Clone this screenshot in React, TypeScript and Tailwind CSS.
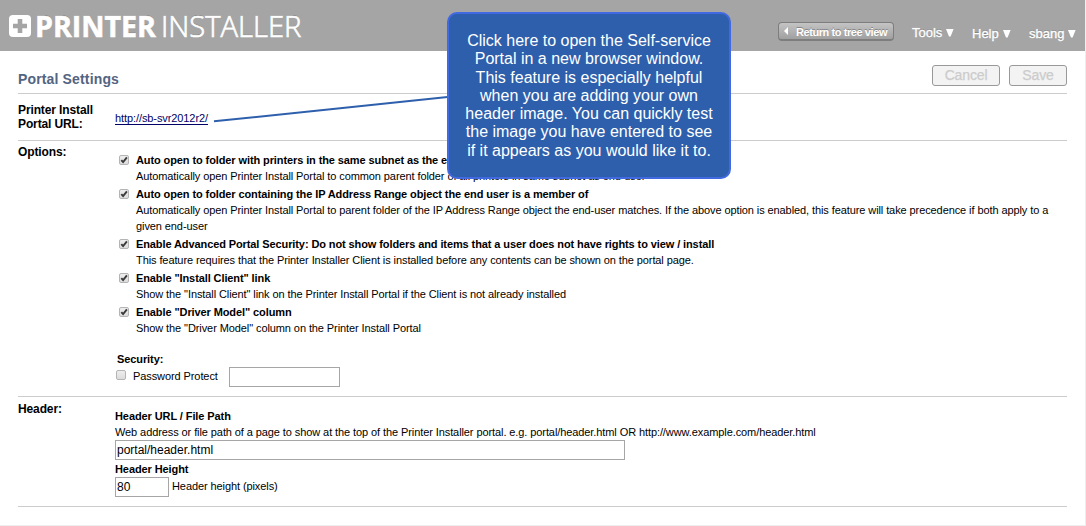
import type { ReactNode } from "react";

function CheckBox({ checked = false }: { checked?: boolean }) {
  return (
    <span
      role="checkbox"
      aria-checked={checked}
      className="block h-[10px] w-[10px] shrink-0 rounded-[2px] border border-[#b4b4b4] bg-linear-to-b from-[#eeeeee] to-[#dcdcdc]"
    >
      {checked && (
        <svg viewBox="0 0 8 8" className="block h-2 w-2">
          <path d="M1.3 4.1 L3.1 6.1 L6.9 1.3" fill="none" stroke="#3a3a3a" strokeWidth="1.9" />
        </svg>
      )}
    </span>
  );
}

function Option({ title, children }: { title: ReactNode; children: ReactNode }) {
  return (
    <div className="mb-0.5 flex gap-[7px]">
      <div className="pt-[3px]">
        <CheckBox checked />
      </div>
      <div className="leading-4 whitespace-nowrap">
        <div className="font-bold tracking-[-0.1px]">{title}</div>
        <div>{children}</div>
      </div>
    </div>
  );
}

function Row({ label, className, children }: { label: ReactNode; className: string; children: ReactNode }) {
  return (
    <section className={`flex border-b border-[#cccccc] ${className}`}>
      <h2 className="w-[97px] shrink-0 text-[12px] leading-[14px] font-bold tracking-[-0.12px] whitespace-nowrap">{label}</h2>
      <div className="min-w-0 flex-1">{children}</div>
    </section>
  );
}

function Menu({ label }: { label: string }) {
  return (
    <span className="flex items-center gap-1 [text-shadow:0_-1px_0_#858585]">
      <span className="[-webkit-text-stroke:0.3px_white]">{label}</span>
      <svg viewBox="0 0 8 8" className="h-2 w-2">
        <path d="M0 0H7.6L4.6 7.6H3Z" fill="white" />
      </svg>
    </span>
  );
}

export default function App() {
  return (
    <div className="relative h-[526px] w-[1086px] overflow-hidden bg-white font-['Liberation_Sans',Arial,sans-serif] text-[11px] tracking-[-0.09px] text-black">
      <div className="h-full w-full border-r border-b border-[#eeeeee]">
        <header className="flex h-[51px] bg-[#a5a5a5] text-white">
          <div className="flex w-[778px] pt-[15px] pl-[9px]">
            <svg viewBox="0 0 22 22" className="h-[22px] w-[22px]">
              <rect width="22" height="22" rx="4" fill="white" />
              <path d="M8.7 4H13.3V8.7H18V13.3H13.3V18H8.7V13.3H4V8.7H8.7Z" fill="#a5a5a5" />
            </svg>
            <div className="ml-[4px] flex h-[22px] items-center font-['Open_Sans',sans-serif] text-[29px] leading-[22px] tracking-normal whitespace-nowrap [text-shadow:0_-1px_0_#8c8c8c]">
              <span className="w-[126px]">
                <span className="inline-block origin-left scale-x-[0.985] font-bold [-webkit-text-stroke:0.6px_white]">PRINTER</span>
              </span>
              <span>
                <span className="inline-block origin-left scale-x-[1.005] font-light [-webkit-text-stroke:0.7px_white]">INSTALLER</span>
              </span>
            </div>
          </div>
          <button className="mt-[22px] flex h-[19px] w-[116px] items-center rounded-[4px] border border-b-2 border-[#7d7d7d] bg-linear-to-b from-[#c4c4c4] to-[#a0a0a0] pl-[5px] text-[11px] font-bold tracking-[-0.42px] whitespace-nowrap [text-shadow:0_-1px_0_#858585]">
            <svg viewBox="0 0 4 8" className="mr-[8px] h-[8px] w-[4px] shrink-0">
              <path d="M4 0V8L0 4Z" fill="white" />
            </svg>
            <span className="pt-[2px]">Return to tree view</span>
          </button>
          <nav className="flex pt-[25px] text-[13px] leading-4 tracking-normal whitespace-nowrap">
            <div className="ml-[18px] w-[60px]"><Menu label="Tools" /></div>
            <div className="w-[57px] pt-px"><Menu label="Help" /></div>
            <div className="pt-px"><Menu label="sbang" /></div>
          </nav>
        </header>
        <main className="mr-[18px] ml-[18px]">
          <div className="flex h-[43px] justify-between border-b border-[#cccccc]">
            <h1 className="pt-[20px] text-[14px] leading-4 font-bold tracking-[0.15px] text-[#536482]">Portal Settings</h1>
            <div className="flex gap-[9px] pt-[14px] text-[14px] tracking-[-0.15px] text-[#cccccc] [-webkit-text-stroke:0.25px_#cccccc]">
              <button className="h-[21px] w-[68px] rounded-[3px] border border-[#999999] bg-[#f3f3f3] pb-px leading-[18px]">Cancel</button>
              <button className="h-[21px] w-[58px] rounded-[3px] border border-[#999999] bg-[#f3f3f3] pb-px leading-[18px]">Save</button>
            </div>
          </div>
          <Row label={<>Printer Install<br />Portal URL:</>} className="h-[47px] pt-[9px]">
            <a className="mt-[10px] inline-block border-b border-[#000066] text-[11px] leading-[11px] text-[#000066]">http://sb-svr2012r2/</a>
          </Row>
          <Row label="Options:" className="h-[256px] pt-[4px]">
            <div className="pt-[7px] pl-[4px]">
              <Option title="Auto open to folder with printers in the same subnet as the end user">
                Automatically open Printer Install Portal to common parent folder of all printers in same subnet as end-user
              </Option>
              <Option title="Auto open to folder containing the IP Address Range object the end user is a member of">
                Automatically open Printer Install Portal to parent folder of the IP Address Range object the end-user matches. If the above option is enabled, this feature will take precedence if both apply to a
                <br />
                given end-user
              </Option>
              <Option title="Enable Advanced Portal Security: Do not show folders and items that a user does not have rights to view / install">
                This feature requires that the Printer Installer Client is installed before any contents can be shown on the portal page.
              </Option>
              <Option title={'Enable "Install Client" link'}>
                Show the "Install Client" link on the Printer Install Portal if the Client is not already installed
              </Option>
              <Option title={'Enable "Driver Model" column'}>
                Show the "Driver Model" column on the Printer Install Portal
              </Option>
            </div>
            <div className="pt-[13px] pl-[1px]">
              <div className="pl-px leading-4 font-bold">Security:</div>
              <div className="flex h-5">
                <div className="pt-[3px]"><CheckBox /></div>
                <div className="ml-[7px] w-[96px] leading-[19px]">Password Protect</div>
                <input aria-label="Password" className="h-5 w-[111px] border border-[#a6a6a6]" />
              </div>
            </div>
          </Row>
          <Row label="Header:" className="h-[110px] pt-[5px]">
            <div className="pt-[6px] leading-4 whitespace-nowrap">
              <div className="font-bold">Header URL / File Path</div>
              <div>Web address or file path of a page to show at the top of the Printer Installer portal. e.g. portal/header.html OR http://www.example.com/header.html</div>
              <input aria-label="Header URL" defaultValue="portal/header.html" className="block h-5 w-[510px] border border-[#a6a6a6] px-px text-[12px] tracking-normal" />
              <div className="mt-px font-bold">Header Height</div>
              <div className="flex">
                <input aria-label="Header height" defaultValue="80" className="h-5 w-[54px] border border-[#a6a6a6] px-px text-[12px] tracking-normal" />
                <span className="ml-[3px] leading-[18px]">Header height (pixels)</span>
              </div>
            </div>
          </Row>
        </main>
      </div>
      <svg viewBox="0 0 240 32" className="absolute top-[93px] left-[212px] h-[32px] w-[240px]">
        <path d="M2 28.3L238 3.8" stroke="#2e5fac" strokeWidth="2" />
      </svg>
      <div className="absolute top-[12px] left-[447px] h-[167px] w-[284px] rounded-[10px] border-2 border-[#4169e1] bg-[#2e5fac] pt-[18px] text-center text-[16px] leading-[18.3px] tracking-normal whitespace-nowrap text-white">
        <div>Click here to open the Self-service</div>
        <div>Portal in a new browser window.</div>
        <div>This feature is especially helpful</div>
        <div>when you are adding your own</div>
        <div>header image. You can quickly test</div>
        <div>the image you have entered to see</div>
        <div>if it appears as you would like it to.</div>
      </div>
    </div>
  );
}
